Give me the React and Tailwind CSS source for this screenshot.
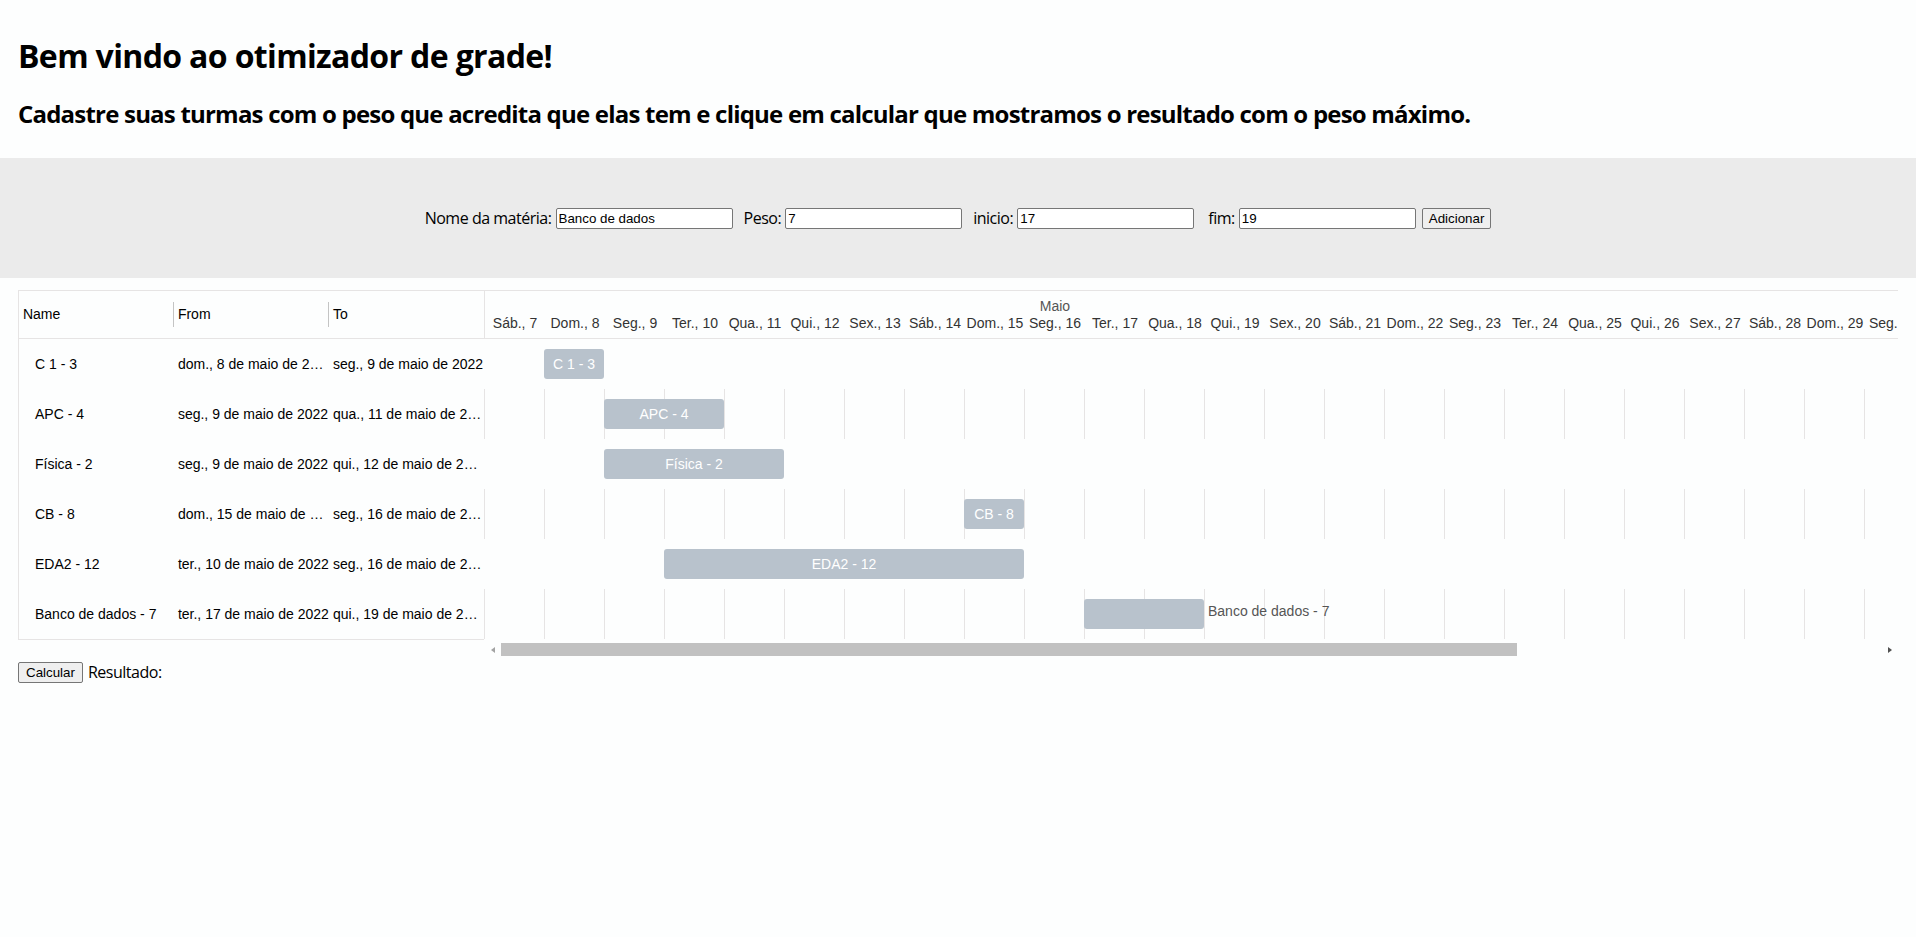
import React from "react";

const COL = 60;
const FIRST_DAY = 7; // sábado, 7 de maio de 2022
const WEEK = ["Dom.", "Seg.", "Ter.", "Qua.", "Qui.", "Sex.", "Sáb."];

const days = Array.from({ length: 24 }, (_, i) => `${WEEK[(6 + i) % 7]}, ${FIRST_DAY + i}`);

const tasks = [
    { name: "C 1 - 3", from: "dom., 8 de maio de 2022", to: "seg., 9 de maio de 2022", start: 8, end: 9 },
    { name: "APC - 4", from: "seg., 9 de maio de 2022", to: "qua., 11 de maio de 2022", start: 9, end: 11 },
    { name: "Física - 2", from: "seg., 9 de maio de 2022", to: "qui., 12 de maio de 2022", start: 9, end: 12 },
    { name: "CB - 8", from: "dom., 15 de maio de 2022", to: "seg., 16 de maio de 2022", start: 15, end: 16 },
    { name: "EDA2 - 12", from: "ter., 10 de maio de 2022", to: "seg., 16 de maio de 2022", start: 10, end: 16 },
    { name: "Banco de dados - 7", from: "ter., 17 de maio de 2022", to: "qui., 19 de maio de 2022", start: 17, end: 19 },
];

const Field = ({ label, value, className }) => (
    <label className={`flex items-center ${className}`}>
        <span className="mr-[4px]">{label}</span>
        <input
            defaultValue={value}
            className="w-[177px] h-[21px] px-[2px] border border-[#767676] rounded-[2px] bg-white text-[13.33px] text-black font-['Liberation_Sans',Arial,sans-serif] tracking-normal outline-none"
        />
    </label>
);

const App = () => {
    return (
        <div className="min-h-screen bg-[#fdfefe] text-black font-['Open_Sans',sans-serif]">
            {/* Title */}
            <div className="px-[18px] pt-[34px]">
                <h1 className="text-[32px] leading-[43px] font-bold tracking-[-0.02em]">Bem vindo ao otimizador de grade!</h1>
                <h2 className="mt-[21px] text-[24px] leading-[32px] font-bold tracking-[-0.033em]">
                    Cadastre suas turmas com o peso que acredita que elas tem e clique em calcular que mostramos o resultado com o peso máximo.
                </h2>
            </div>

            {/* Form */}
            <div className="mt-[28px] h-[120px] bg-[#ebebeb] flex items-center justify-center text-[16px] tracking-[-0.03em]">
                <Field label="Nome da matéria:" value="Banco de dados" />
                <Field label="Peso:" value="7" className="ml-[11px]" />
                <Field label="inicio:" value="17" className="ml-[11px]" />
                <Field label="fim:" value="19" className="ml-[14px]" />
                <button className="ml-[6px] h-[21px] px-[6px] border border-[#767676] rounded-[2px] bg-[#efefef] text-[13.33px] tracking-normal font-['Liberation_Sans',Arial,sans-serif]">
                    Adicionar
                </button>
            </div>

            {/* Gantt */}
            <div className="mx-[18px] mt-[12px] flex items-start text-[14px] font-['Liberation_Sans',Arial,sans-serif]">
                {/* Task list */}
                <div className="w-[466px] shrink-0 border-l border-b border-[#e6e4e4]">
                    <div className="h-[49px] flex items-center border-t border-b border-[#e6e4e4]">
                        <div className="w-[154px]">{"\u00a0"}Name</div>
                        <div className="w-px h-[25px] bg-[#c4c4c4]" />
                        <div className="w-[154px]">{"\u00a0"}From</div>
                        <div className="w-px h-[25px] bg-[#c4c4c4]" />
                        <div className="w-[155px]">{"\u00a0"}To</div>
                    </div>
                    {tasks.map((t) => (
                        <div key={t.name} className="h-[50px] flex items-center">
                            <div className="w-[155px] shrink-0 pl-[16px] truncate">{t.name}</div>
                            <div className="w-[155px] shrink-0 truncate">{"\u00a0"}{t.from}</div>
                            <div className="w-[155px] shrink-0 truncate">{"\u00a0"}{t.to}</div>
                        </div>
                    ))}
                </div>

                {/* Timeline */}
                <div className="flex-1 min-w-0">
                    <div className="overflow-hidden">
                        <div className="h-[49px] pt-[7px] border-t border-b border-l border-[#e6e4e4] leading-[17px]">
                            <div className="w-[1140px] text-center text-[#555]">Maio</div>
                            <div className="flex">
                                {days.map((d) => (
                                    <div key={d} className="w-[60px] shrink-0 text-center whitespace-nowrap text-[#333]">{d}</div>
                                ))}
                            </div>
                        </div>
                        {tasks.map((t, r) => {
                            const left = (t.start - FIRST_DAY) * COL;
                            const width = (t.end - t.start) * COL;
                            const inside = t.name.length * 7 < width;
                            return (
                                <div key={t.name} className="relative h-[50px] flex">
                                    {days.map((d) => (
                                        <div
                                            key={d}
                                            className={r % 2 === 1 ? "w-[60px] shrink-0 border-l border-[#e6e4e4]" : "w-[60px] shrink-0"}
                                        />
                                    ))}
                                    <div
                                        className="absolute top-[10px] h-[30px] rounded-[3px] bg-[#b8c2cc] flex items-center justify-center text-white whitespace-nowrap"
                                        style={{ left, width }}
                                    >
                                        {inside ? t.name : null}
                                    </div>
                                    {!inside && (
                                        <div
                                            className="absolute top-[10px] h-[30px] -mt-[3px] flex items-center text-[#555] whitespace-nowrap"
                                            style={{ left: left + width + 4 }}
                                        >
                                            {t.name}
                                        </div>
                                    )}
                                </div>
                            );
                        })}
                    </div>
                    {/* horizontal scrollbar */}
                    <div className="mt-[2px] h-[17px] flex">
                        <div className="w-[17px] flex items-center justify-center">
                            <div className="w-0 h-0 border-y-[3px] border-y-transparent border-r-[4px] border-r-[#a3a3a3]" />
                        </div>
                        <div className="flex-1 py-[2px]">
                            <div className="w-[1016px] h-full bg-[#c1c1c1]" />
                        </div>
                        <div className="w-[17px] flex items-center justify-center">
                            <div className="w-0 h-0 border-y-[3px] border-y-transparent border-l-[4px] border-l-[#505050]" />
                        </div>
                    </div>
                </div>
            </div>

            {/* Calcular */}
            <div className="mx-[18px] mt-[2px] flex items-center text-[16px] tracking-[-0.03em]">
                <button className="h-[21px] px-[7px] border border-[#767676] rounded-[2px] bg-[#efefef] text-[13.33px] tracking-normal font-['Liberation_Sans',Arial,sans-serif]">
                    Calcular
                </button>
                <span className="ml-[5px]">Resultado:</span>
            </div>
        </div>
    );
};

export default App;
